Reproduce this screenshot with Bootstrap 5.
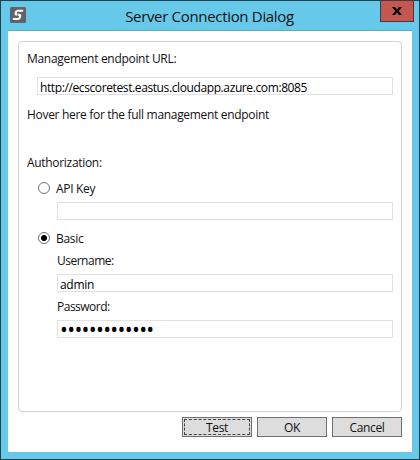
<!DOCTYPE html>
<html lang="en">
<head>
<meta charset="utf-8">
<title>Server Connection Dialog</title>
<link rel="stylesheet" href="https://cdn.jsdelivr.net/npm/bootstrap@5.3.0/dist/css/bootstrap.min.css">
<style>
body{font-family:"Open Sans","Noto Sans",sans-serif;font-size:12px;line-height:16px;color:#111;letter-spacing:-.31px}
.dialog{width:420px;height:460px;background:#66c9e9;border:1px solid #1c4252}
.title-bar{height:29px;padding-left:9px}
.app-icon{margin-top:6px}
.caption{font-size:15px;line-height:20px;padding-top:5px;padding-left:13px;letter-spacing:-.32px}
.close-box{width:34px;height:22px;margin-top:-1px;margin-right:5px;background:#c45850;border:1px solid #47393f;border-radius:0}
.client{margin:0 7px;width:404px;height:422px;border-top:1px solid #62a8c0;padding:10px 10px 0}
.group{width:384px;height:371px;border:1px solid #d2d2d2;border-radius:4px;padding:9px 8px 0}
.group .form-control{height:18px;min-height:0;padding:2px 2px 0;font-size:12px;line-height:14px;border:1px solid #e0e1e6;border-radius:0;color:#000;letter-spacing:inherit}
.group .endpoint{margin:10px 0 0 10px;width:356px;letter-spacing:-.39px}
.hint{margin-top:12px}
.auth{margin-top:32px}
.choice{height:16px;margin-left:11px;gap:6px}
.choice span{padding-top:2px}
.choice .form-check-input{width:12px;height:12px;margin:0;border:1px solid #707070;background:#fff;box-shadow:none}
.choice .form-check-input:checked{background:radial-gradient(circle,#000 0 2.7px,#fff 3.4px)}
.sub{margin-left:30px;width:336px}
.choice-first{margin-top:9px}
.choice-next{margin-top:10px}
.key-field{margin-top:6px}
.name-label,.pass-label{margin-top:7px;letter-spacing:-.5px}
.name-field,.pass-field{margin-top:5px}
.group .pass-field{font-size:21px;letter-spacing:-.7px;padding-top:0;line-height:16px}
.btn-row{gap:5px;margin-top:5px}
.btn-row .btn{width:70px;height:20px;padding:1px 0 0;font-size:12px;line-height:17px;background:#ddd;border:1px solid #707070;border-radius:0;color:#111;position:relative;letter-spacing:-.35px}
.focus-mark{left:1px;top:1px;right:1px;bottom:1px;border:1px dashed #444}
</style>
</head>
<body class="m-0 overflow-hidden">
<div class="dialog d-flex flex-column">
  <div class="title-bar d-flex align-items-start justify-content-between">
    <svg class="app-icon" width="16" height="16" viewBox="0 0 16 16"><rect width="16" height="16" rx="1.5" fill="#5f6468"/><path d="M13.2 3.7H7.8Q6.4 3.7 6 5L5.6 6.4Q5.3 7.5 6.6 7.5H7.6M8.2 7.9H9.3Q10.6 7.9 10.2 9.2L9.6 10.9Q9.2 12 7.8 12H2.8" fill="none" stroke="#fff" stroke-width="2.1"/></svg>
    <div class="caption">Server Connection Dialog</div>
    <button class="close-box btn p-0 d-flex align-items-center justify-content-center" aria-label="Close"><svg width="10" height="8" viewBox="0 0 10 8"><path d="M0 0H3L5 2.4 7 0H10L6.6 4 10 8H7L5 5.6 3 8H0L3.4 4Z" fill="#000"/></svg></button>
  </div>
  <div class="client bg-white">
    <div class="group">
      <div>Management endpoint URL:</div>
      <input class="form-control endpoint" value="http://ecscoretest.eastus.cloudapp.azure.com:8085">
      <div class="hint">Hover here for the full management endpoint</div>
      <div class="auth">Authorization:</div>
      <label class="choice choice-first d-flex align-items-center"><input type="radio" name="auth" class="form-check-input"><span>API Key</span></label>
      <input class="form-control sub key-field">
      <label class="choice choice-next d-flex align-items-center"><input type="radio" name="auth" class="form-check-input" checked><span>Basic</span></label>
      <div class="sub name-label">Username:</div>
      <input class="form-control sub name-field" value="admin">
      <div class="sub pass-label">Password:</div>
      <input type="password" class="form-control sub pass-field" value="1234567890123">
    </div>
    <div class="btn-row d-flex justify-content-end">
      <button class="btn">Test<span class="focus-mark position-absolute"></span></button>
      <button class="btn">OK</button>
      <button class="btn">Cancel</button>
    </div>
  </div>
</div>
<script src="https://cdn.jsdelivr.net/npm/bootstrap@5.3.0/dist/js/bootstrap.bundle.min.js"></script>
</body>
</html>
